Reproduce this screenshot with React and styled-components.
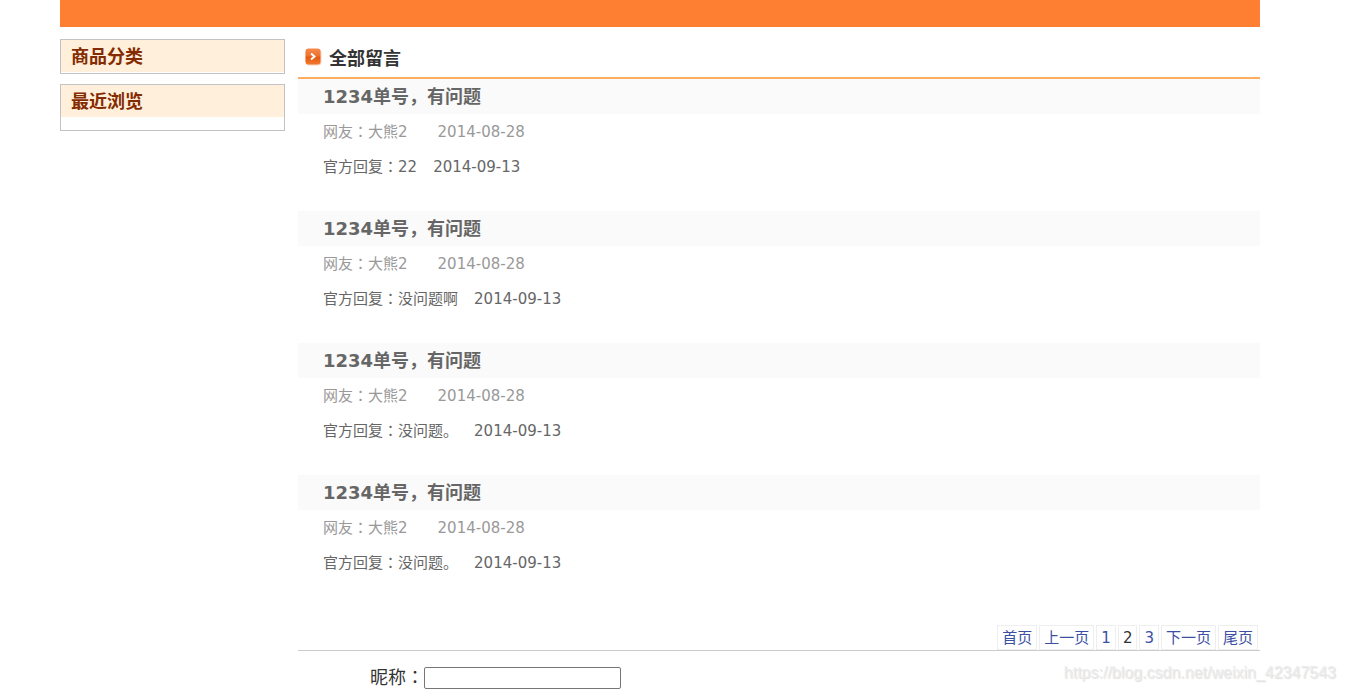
import React from "react";
import styled, { createGlobalStyle } from "styled-components";

const GlobalStyle = createGlobalStyle`
  * {
    box-sizing: border-box;
  }

  body {
    margin: 0;
    background-color: #ffffff;
    color: #333333;
    font-family: "DejaVu Sans", "Noto Sans CJK SC", sans-serif;
    font-size: 15px;
  }

  h2, h3, p {
    margin: 0;
  }
`;

const Page = styled.div`
  position: relative;
  padding: 0 86px 0 60px;
`;

const TopBar = styled.header`
  height: 27px;
  background-color: #ff7f32;
`;

const Columns = styled.div`
  display: flex;
  align-items: flex-start;
  gap: 13px;
  padding-top: 12px;
`;

const Sidebar = styled.aside`
  flex: 0 0 225px;
  display: flex;
  flex-direction: column;
  gap: 10px;
`;

const SideBox = styled.section`
  border: 1px solid #c3c3c3;
  padding-bottom: ${(props) => (props.$space ? "13px" : "1px")};
`;

const SideTitle = styled.h2`
  height: 32px;
  padding-left: 10px;
  background-color: #ffefdb;
  color: #842b00;
  font-size: 18px;
  line-height: 34px;
`;

const Main = styled.main`
  flex: 1;
  min-width: 0;
`;

const MainTitle = styled.h2`
  display: flex;
  align-items: center;
  gap: 7px;
  height: 40px;
  padding: 2px 0 0 7px;
  border-bottom: 2px solid #ffad5f;
  font-size: 18px;
  line-height: 36px;

  svg {
    margin-bottom: 4px;
  }
`;

const Message = styled.article`
  margin-bottom: 27px;
`;

const MessageTitle = styled.h3`
  padding-left: 25px;
  background-color: #fafafa;
  color: #666666;
  font-size: 18px;
  line-height: 35px;
`;

const MessageLine = styled.p`
  display: flex;
  gap: ${(props) => (props.$light ? "30px" : "16px")};
  height: 35px;
  padding-left: 25px;
  color: ${(props) => (props.$light ? "#999999" : "#666666")};
  line-height: 37px;
`;

// keeps the colon in the middle of its square, without making the line taller
const Colon = styled.span`
  font-family: "Noto Sans CJK JP", sans-serif;
  line-height: 0;
`;

const Pager = styled.nav`
  display: flex;
  justify-content: flex-end;
  gap: 2px;
  margin-top: 45px;
  padding-right: 2px;
  border-bottom: 1px solid #cccccc;
`;

const PageLink = styled.a`
  height: 25px;
  padding: 0 4px;
  border: 1px solid #eeeeee;
  color: ${(props) => (props.$current ? "#333333" : "#3b4fa3")};
  line-height: 24px;
  text-decoration: none;
`;

const FormRow = styled.form`
  display: flex;
  align-items: center;
  height: 40px;
  padding: 14px 0 0 72px;
  font-size: 18px;
  line-height: 22px;
`;

const NameInput = styled.input`
  width: 197px;
  height: 22px;
  border: 1px solid #767676;
  border-radius: 2px;
  background-color: #ffffff;
`;

const Watermark = styled.span`
  position: absolute;
  right: 10px;
  bottom: 8px;
  color: #ececec;
  font-family: "Liberation Sans", sans-serif;
  font-size: 16px;
  line-height: 20px;
  text-shadow: 1px 1px 1px #dedede;
`;

const messages = [
  { id: 1, reply: "22" },
  { id: 2, reply: "没问题啊" },
  { id: 3, reply: "没问题。" },
  { id: 4, reply: "没问题。" },
];

const pages = ["首页", "上一页", "1", "2", "3", "下一页", "尾页"];

function ArrowIcon() {
  return (
    <svg width="17" height="18" viewBox="0 0 17 18" aria-hidden="true">
      <defs>
        <linearGradient id="arrowFill" x1="0" y1="0" x2="0" y2="1">
          <stop offset="0" stopColor="#f58a4c" />
          <stop offset="0.45" stopColor="#ee7230" />
          <stop offset="0.55" stopColor="#e55a10" />
          <stop offset="1" stopColor="#f07a30" />
        </linearGradient>
      </defs>
      <rect x="0.5" y="1" width="16" height="16.5" rx="3.5" fill="#f8d5c2" />
      <rect x="0.5" y="0.5" width="15" height="16" rx="3" fill="url(#arrowFill)" />
      <path d="M6 5.5 L9.5 8.5 L6 11.5" fill="none" stroke="#ffffff" strokeWidth="2" />
    </svg>
  );
}

export default function App() {
  return (
    <Page>
      <GlobalStyle />
      <TopBar />
      <Columns>
        <Sidebar>
          <SideBox>
            <SideTitle>商品分类</SideTitle>
          </SideBox>
          <SideBox $space>
            <SideTitle>最近浏览</SideTitle>
          </SideBox>
        </Sidebar>

        <Main>
          <MainTitle>
            <ArrowIcon />
            全部留言
          </MainTitle>

          {messages.map((message) => (
            <Message key={message.id}>
              <MessageTitle>1234单号，有问题</MessageTitle>
              <MessageLine $light>
                <span>网友<Colon>：</Colon>大熊2</span>
                <time>2014-08-28</time>
              </MessageLine>
              <MessageLine>
                <span>官方回复<Colon>：</Colon>{message.reply}</span>
                <time>2014-09-13</time>
              </MessageLine>
            </Message>
          ))}

          <Pager>
            {pages.map((page) => (
              <PageLink key={page} href="#" $current={page === "2"}>
                {page}
              </PageLink>
            ))}
          </Pager>

          <FormRow>
            <label htmlFor="nickname">昵称<Colon>：</Colon></label>
            <NameInput id="nickname" type="text" />
          </FormRow>
        </Main>
      </Columns>
      <Watermark>https://blog.csdn.net/weixin_42347543</Watermark>
    </Page>
  );
}
